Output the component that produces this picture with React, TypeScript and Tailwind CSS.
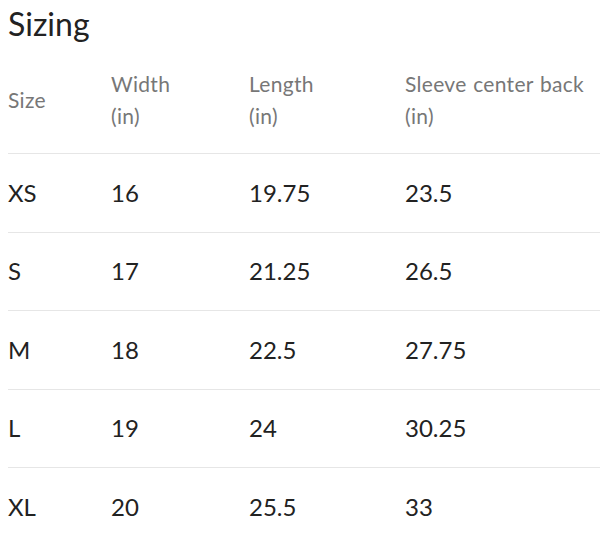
const rows = [
  { size: "XS", width: "16", length: "19.75", sleeve: "23.5" },
  { size: "S", width: "17", length: "21.25", sleeve: "26.5" },
  { size: "M", width: "18", length: "22.5", sleeve: "27.75" },
  { size: "L", width: "19", length: "24", sleeve: "30.25" },
  { size: "XL", width: "20", length: "25.5", sleeve: "33" },
];

export default function App() {
  return (
    <div className="w-[600px] h-[534px] bg-white pl-2 font-['Lato',sans-serif] overflow-hidden">
      <h2 className="text-[32px] leading-[44px] pt-[2px] text-[#222]">Sizing</h2>

      {/* Header */}
      <div className="grid grid-cols-[103px_138px_156px_1fr] items-center h-[108px] border-b border-[#e6e6e6] text-[21px] leading-[32px] text-[#777] tracking-[0.3px] [word-spacing:1px]">
        <div>Size</div>
        <div>
          Width
          <br />
          (in)
        </div>
        <div>
          Length
          <br />
          (in)
        </div>
        <div>
          Sleeve center back
          <br />
          (in)
        </div>
      </div>

      {/* Rows */}
      {rows.map((r, i) => (
        <div
          key={r.size}
          className={`grid grid-cols-[103px_138px_156px_1fr] items-center h-[78.5px] text-[24px] text-[#222] ${
            i < rows.length - 1 ? "border-b border-[#e6e6e6]" : ""
          }`}
        >
          <div>{r.size}</div>
          <div>{r.width}</div>
          <div>{r.length}</div>
          <div>{r.sleeve}</div>
        </div>
      ))}
    </div>
  );
}
